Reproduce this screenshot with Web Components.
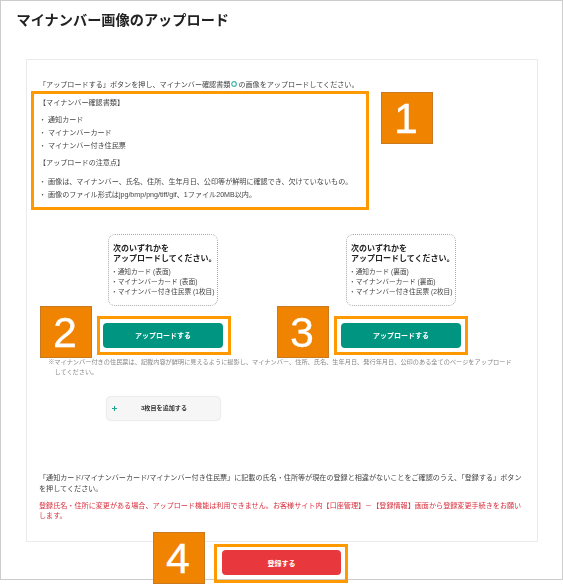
<!doctype html>
<html lang="ja">
<head>
<meta charset="utf-8">
<title>マイナンバー画像のアップロード</title>
<style>
html, body { margin: 0; background: #fff; }
body { font-family: "Liberation Sans", "Noto Sans CJK JP", sans-serif; color: #444; }
</style>
</head>
<body>
<upload-page>
	<span slot="title">マイナンバー画像のアップロード</span>
	<upload-card>
		<span slot="lead">「アップロードする」ボタンを押し、マイナンバー確認書類<info-mark></info-mark>の画像をアップロードしてください。</span>
		<doc-notes slot="notes"></doc-notes>
		<upload-slot slot="first" side="表面" page="1枚目"></upload-slot>
		<upload-slot slot="second" side="裏面" page="2枚目"></upload-slot>
		<span slot="note">※マイナンバー付きの住民票は、記載内容が鮮明に見えるように撮影し、マイナンバー、住所、氏名、生年月日、発行年月日、公印のある全てのページをアップロードしてください。</span>
		<add-button slot="add">3枚目を追加する</add-button>
		<span slot="confirm">「通知カード/マイナンバーカード/マイナンバー付き住民票」に記載の氏名・住所等が現在の登録と相違がないことをご確認のうえ、「登録する」ボタンを押してください。</span>
		<span slot="warn">登録氏名・住所に変更がある場合、アップロード機能は利用できません。お客様サイト内【口座管理】－【登録情報】画面から登録変更手続きをお願いします。</span>
	</upload-card>
	<step-mark slot="marks" n="1" style="left:381px;top:92px"></step-mark>
	<step-mark slot="marks" n="2" style="left:40px;top:306px"></step-mark>
	<step-mark slot="marks" n="3" style="left:277px;top:306px"></step-mark>
	<step-mark slot="marks" n="4" style="left:153px;top:532px"></step-mark>
	<frame-mark slot="marks" style="left:31px;top:91px;width:338px;height:119px"></frame-mark>
	<frame-mark slot="marks" style="left:97px;top:316px;width:134px;height:39px"></frame-mark>
	<frame-mark slot="marks" style="left:334px;top:316px;width:134px;height:39px"></frame-mark>
	<frame-mark slot="marks" style="left:214px;top:544px;width:134px;height:39px"></frame-mark>
	<action-button slot="marks" style="left:222px;top:550px;width:119px" color="#e8383d">登録する</action-button>
</upload-page>

<script>
const tpl = html => {
	const t = document.createElement('template')
	t.innerHTML = html
	return t
}

class Base extends HTMLElement {
	constructor() {
		super()
		this.attachShadow({mode: 'open'})
		this.shadowRoot.append(this.constructor.tpl.content.cloneNode(true))
	}
}

class UploadPage extends Base {
	static tpl = tpl(`<style>
:host { display: block; position: relative; box-sizing: border-box; width: 563px; height: 584px; overflow: hidden; filter: blur(.3px); }
#frame { box-sizing: border-box; width: 562.5px; height: 580px; border: 1.5px solid #ccc; padding: 7.5px 20px 0 15.5px; }
h1 { margin: 0 0 27px; font-size: 14.2px; line-height: 23px; font-weight: bold; color: #222; }
</style>
<div id="frame">
	<h1><slot name="title"></slot></h1>
	<slot></slot>
</div>
<slot name="marks"></slot>`)
}

class UploadCard extends Base {
	static tpl = tpl(`<style>
:host { display: block; box-sizing: border-box; margin-left: 9px; width: 512px; height: 483px; border: 1.5px solid #ebebeb; padding: 20px 12.5px 0; font-size: 7.1px; line-height: 10px; }
#columns { display: grid; grid-template-columns: 110px 110px; column-gap: 128px; padding-left: 69px; margin-top: 32.5px; }
#note { margin: 9px 0 0 9.2px; padding-left: 6.2px; text-indent: -6.2px; color: #888; font-size: 6.2px; width: 462px; }
#add { padding-left: 68px; margin-top: 19.5px; }
#confirm { margin-top: 53.5px; line-height: 10.5px; }
#warn { margin-top: 6.5px; color: #d8303e; line-height: 10.5px; }
</style>
<slot name="lead"></slot>
<slot name="notes"></slot>
<div id="columns"><slot name="first"></slot><slot name="second"></slot></div>
<div id="note"><slot name="note"></slot></div>
<div id="add"><slot name="add"></slot></div>
<div id="confirm"><slot name="confirm"></slot></div>
<div id="warn"><slot name="warn"></slot></div>`)
}

class InfoMark extends Base {
	static tpl = tpl(`<style>
:host { display: inline-block; width: 6px; height: 6px; margin: 0 1px; vertical-align: -0.5px; }
svg { display: block; }
</style>
<svg width="6" height="6" viewBox="0 0 6 6"><circle cx="3" cy="3" r="2.3" fill="none" stroke="#3fb8a5" stroke-width="1.2"/></svg>`)
}

class DocNotes extends Base {
	static tpl = tpl(`<style>
:host { display: block; margin-top: 8px; }
p { margin: 0; }
ul { list-style: none; margin: 6px 0 5px; padding: 0; }
ul.last { margin: 8px 0 6px; }
li { line-height: 13px; }
li::before { content: "・"; display: inline-block; width: 9px; }
</style>
<p>【マイナンバー確認書類】</p>
<ul>
	<li>通知カード</li>
	<li>マイナンバーカード</li>
	<li>マイナンバー付き住民票</li>
</ul>
<p>【アップロードの注意点】</p>
<ul class="last">
	<li>画像は、マイナンバー、氏名、住所、生年月日、公印等が鮮明に確認でき、欠けていないもの。</li>
	<li>画像のファイル形式はjpg/bmp/png/tiff/gif、1ファイル20MB以内。</li>
</ul>`)
}

class UploadSlot extends Base {
	static tpl = tpl(`<style>
:host { display: block; width: 110px; }
#hint { box-sizing: border-box; height: 72px; border: 1px dotted #aaa; border-radius: 7px; padding: 8.5px 0 0 4px; white-space: nowrap; }
b { display: block; font-size: 8px; line-height: 10px; color: #222; margin-bottom: 3px; }
div.row { line-height: 10.4px; font-size: 6.7px; margin-left: -2px; }
action-button { position: relative; display: block; width: 120px; margin: 17px 0 0 -5px; font-size: 7px; }
</style>
<div id="hint">
	<b>次のいずれかを<br>アップロードしてください。</b>
	<div class="row">・通知カード (<span class="side"></span>)</div>
	<div class="row">・マイナンバーカード (<span class="side"></span>)</div>
	<div class="row">・マイナンバー付き住民票 (<span class="page"></span>)</div>
</div>
<action-button color="#009580">アップロードする</action-button>`)

	connectedCallback() {
		this.shadowRoot.querySelectorAll('.side').forEach(el => el.textContent = this.getAttribute('side'))
		this.shadowRoot.querySelector('.page').textContent = this.getAttribute('page')
	}
}

class ActionButton extends Base {
	static tpl = tpl(`<style>
:host { display: block; position: absolute; box-sizing: border-box; height: 25px; border-radius: 4px; color: #fff; font-size: 7px; font-weight: bold; }
div { display: flex; height: 100%; align-items: center; justify-content: center; border-radius: inherit; }
</style>
<div><slot></slot></div>`)

	connectedCallback() {
		this.style.background = this.getAttribute('color')
	}
}

class AddButton extends Base {
	static tpl = tpl(`<style>
:host { display: flex; box-sizing: border-box; width: 113px; height: 23px; align-items: center; background: #f6f6f6; border-radius: 4px; box-shadow: 0 0 2px #bbb; color: #333; font-size: 6.1px; font-weight: bold; }
i { width: 5px; height: 5px; margin-left: 5px; background: linear-gradient(#22a58f, #22a58f) center/100% 1px no-repeat, linear-gradient(#22a58f, #22a58f) center/1px 100% no-repeat; }
span { flex: 1; text-align: center; padding-right: 9px; }
</style>
<i></i><span><slot></slot></span>`)
}

class StepMark extends Base {
	static tpl = tpl(`<style>
:host { position: absolute; box-sizing: border-box; width: 52px; height: 52px; padding-right: 2px; display: flex; align-items: center; justify-content: center; background: #f08300; border: 1px solid #c87a20; color: #fff; font: 43px/1 "Liberation Sans", sans-serif; -webkit-text-stroke: .3px #fff; }
</style>
<span></span>`)

	connectedCallback() {
		this.shadowRoot.querySelector('span').textContent = this.getAttribute('n')
	}
}

class FrameMark extends Base {
	static tpl = tpl(`<style>
:host { position: absolute; box-sizing: border-box; border: 3px solid #ff9900; }
</style>`)
}

customElements.define('upload-page', UploadPage)
customElements.define('upload-card', UploadCard)
customElements.define('info-mark', InfoMark)
customElements.define('doc-notes', DocNotes)
customElements.define('action-button', ActionButton)
customElements.define('upload-slot', UploadSlot)
customElements.define('add-button', AddButton)
customElements.define('step-mark', StepMark)
customElements.define('frame-mark', FrameMark)
</script>
</body>
</html>
